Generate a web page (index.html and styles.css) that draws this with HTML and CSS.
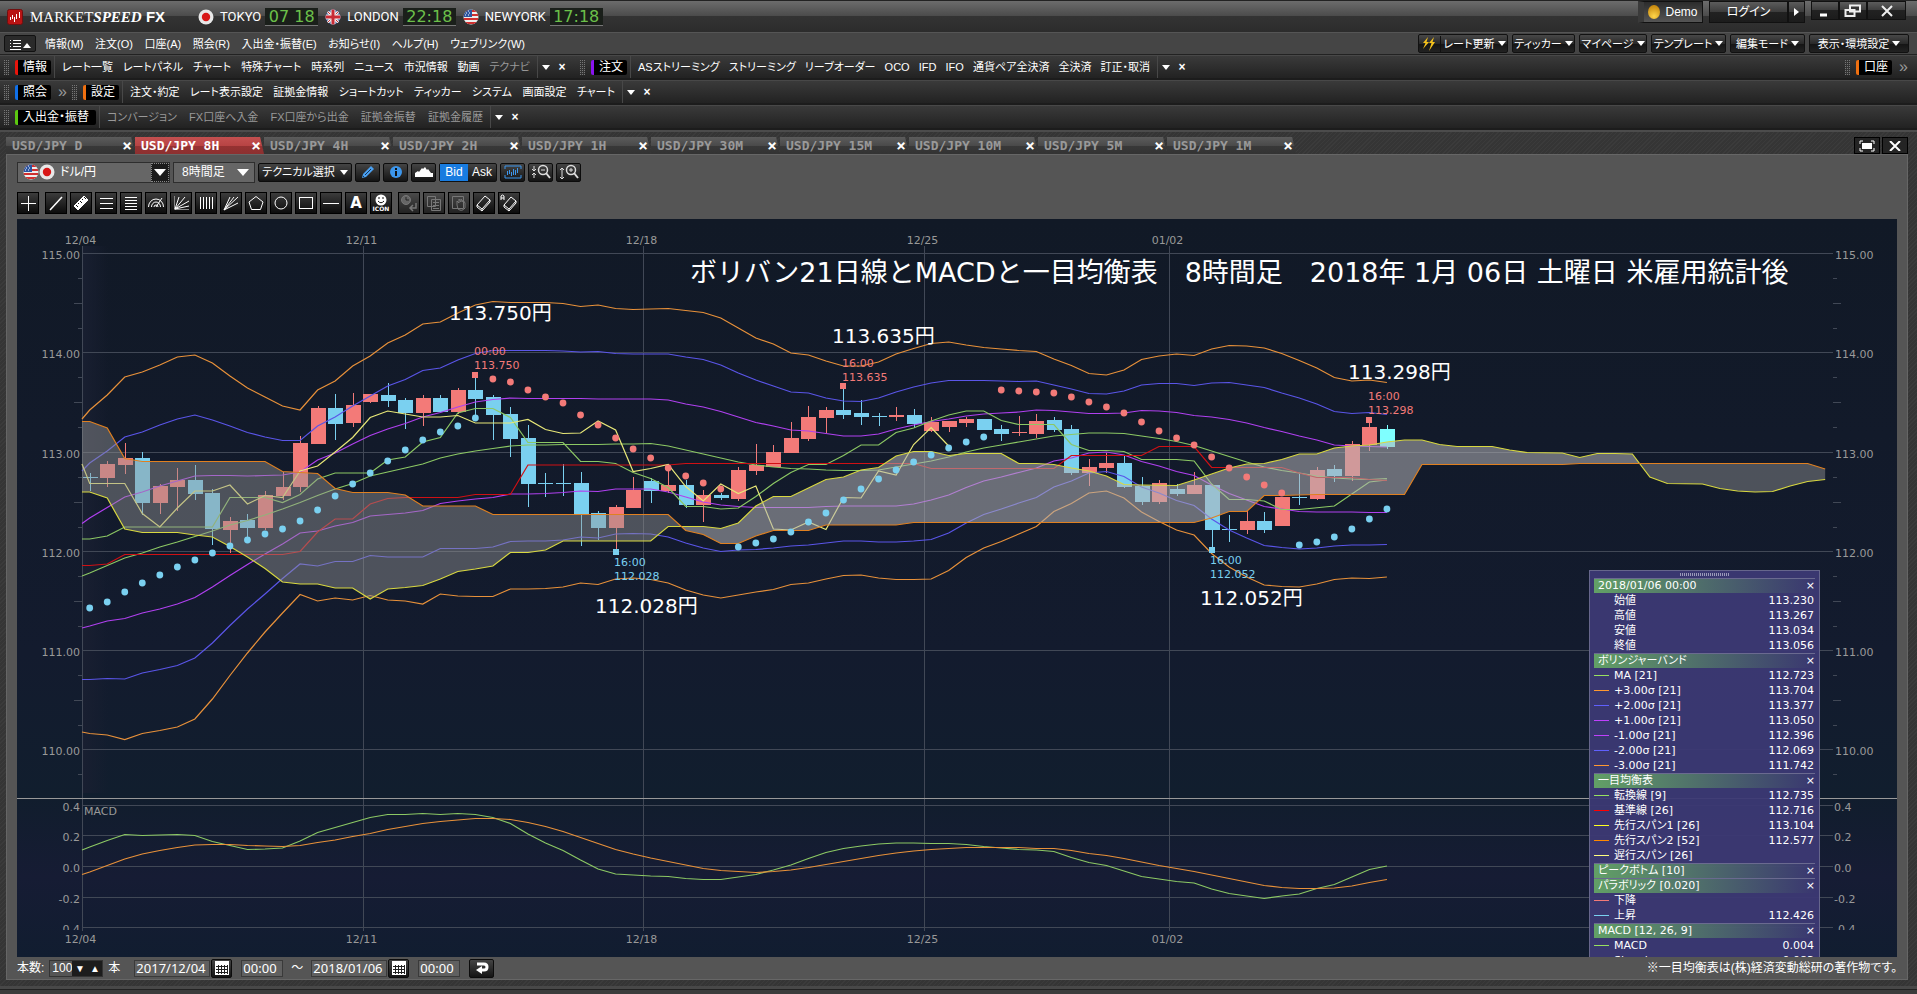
FILE: index.html
```html
<!DOCTYPE html>
<html lang="ja">
<head>
  <meta charset="UTF-8" />
  <meta name="viewport" content="width=device-width, initial-scale=1.0"/>
  <title>MARKETSPEED FX</title>
  <link rel="stylesheet" href="styles.css">
</head>
<body>

  <!-- shared flag icons -->
  <svg class="defs" width="0" height="0">
    <defs>
      <clipPath id="round"><circle cx="8" cy="8" r="7.5"/></clipPath>
      <symbol id="flag-jp" viewBox="0 0 16 16">
        <circle cx="8" cy="8" r="7.5" fill="#e8e8e8"/><circle cx="8" cy="8" r="4.2" fill="#d81818"/>
      </symbol>
      <symbol id="flag-uk" viewBox="0 0 16 16">
        <g clip-path="url(#round)">
          <rect width="16" height="16" fill="#2d4a8c"/>
          <path d="M0 0L16 16M16 0L0 16" stroke="#eee" stroke-width="3"/>
          <path d="M0 0L16 16M16 0L0 16" stroke="#c33" stroke-width="1"/>
          <path d="M8 0V16M0 8H16" stroke="#eee" stroke-width="5"/>
          <path d="M8 0V16M0 8H16" stroke="#c92a34" stroke-width="3"/>
        </g>
      </symbol>
      <symbol id="flag-us" viewBox="0 0 16 16">
        <g clip-path="url(#round)">
          <rect width="16" height="16" fill="#eee"/>
          <path d="M0 2H16M0 6H16M0 10H16M0 14H16" stroke="#cf3030" stroke-width="2"/>
          <rect width="9" height="8" fill="#2c55a0"/>
          <path d="M2 2h1M5 2h1M3 4h1M6 4h1M2 6h1M5 6h1" stroke="#fff"/>
        </g>
      </symbol>
    </defs>
  </svg>

  <header class="titlebar">
    <svg class="logo" viewBox="0 0 16 16"><rect x=".5" y=".5" width="15" height="15" rx="2" fill="#b81414" stroke="#701010"/><path d="M3.500 8v3M5.500 6v4M7.500 8v5M9.500 5v5M12.500 3v6" stroke="#fff"/></svg>
    <h1 class="brand"><span class="brand-market">MARKET</span><span class="brand-speed">SPEED</span> <span class="brand-fx">FX</span></h1>
    <div class="clocks">
      <svg class="flag"><use href="#flag-jp"/></svg><span class="city">TOKYO</span><span class="clock">07 18</span>
      <svg class="flag"><use href="#flag-uk"/></svg><span class="city">LONDON</span><span class="clock">22:18</span>
      <svg class="flag"><use href="#flag-us"/></svg><span class="city">NEWYORK</span><span class="clock">17:18</span>
    </div>
    <div class="title-right">
      <button class="demo"><i class="lamp"></i>Demo</button>
      <div class="login-group"><button class="login">ログイン</button><button class="login-more" aria-label="more"><i class="tri-right"></i></button></div>
      <div class="window-buttons">
        <button aria-label="minimize"><svg width="16" height="14"><path d="M3 11h7" stroke="#fff" stroke-width="3"/></svg></button>
        <button aria-label="restore"><svg width="18" height="14"><path d="M6 1.500h10v6h-10zM1.500 6h9v6h-9z" fill="#333" stroke="#eee" stroke-width="2"/></svg></button>
        <button class="wide" aria-label="close"><svg width="12" height="12"><path d="M1 1L11 11M11 1L1 11" stroke="#eee" stroke-width="2"/></svg></button>
      </div>
    </div>
  </header>

  <nav class="menubar">
    <button class="menu-toggle" aria-label="menu"><svg width="26" height="12"><path d="M3 2.500h1M6 2.500h8M3 5.500h1M6 5.500h8M3 8.500h1M6 8.500h8M3 11.500h11" stroke="#fff"/><path d="M16 10h8l-4-5z" fill="#fff"/></svg></button>
    <div class="menu-items">
      <button>情報(M)</button><button>注文(O)</button><button>口座(A)</button><button>照会(R)</button><button>入出金・振替(E)</button><button>お知らせ(I)</button><button>ヘルプ(H)</button><button>ウェブリンク(W)</button>
    </div>
    <div class="menu-right">
      <button class="pill rate"><svg width="16" height="16"><path d="M7 1L2 7h2.500L2 13l6-7H5.500zM13 1L8 7h2.500L8 15l6-9h-2.500z" fill="#f5c21c"/></svg><span>レート更新</span><i class="tri"></i></button>
      <button class="pill w63">ティッカー<i class="tri"></i></button>
      <button class="pill w68">マイページ<i class="tri"></i></button>
      <button class="pill w75">テンプレート<i class="tri"></i></button>
      <button class="pill w75">編集モード<i class="tri"></i></button>
      <button class="pill w100">表示・環境設定<i class="tri"></i></button>
    </div>
  </nav>

  <div class="toolbars">
    <div class="bar">
      <i class="grip"></i><span class="chip red">情報</span>
      <div class="bar-items info">
        <button>レート一覧</button><button>レートパネル</button><button>チャート</button><button>特殊チャート</button><button>時系列</button><button>ニュース</button><button>市況情報</button><button>動画</button><button class="off">テクナビ</button>
      </div>
      <div class="bar-end"><i class="tri"></i><button class="bar-x" aria-label="close">×</button></div>
      <i class="grip"></i><span class="chip purple">注文</span>
      <div class="bar-items order">
        <button>ASストリーミング</button><button>ストリーミング</button><button>リーブオーダー</button><button>OCO</button><button>IFD</button><button>IFO</button><button>通貨ペア全決済</button><button>全決済</button><button>訂正・取消</button>
      </div>
      <div class="bar-end"><i class="tri"></i><button class="bar-x" aria-label="close">×</button></div>
      <div class="bar-right"><i class="grip"></i><span class="chip orange">口座</span><span class="more">»</span></div>
    </div>
    <div class="bar">
      <i class="grip"></i><span class="chip blue">照会</span><span class="more">»</span>
      <i class="grip"></i><span class="chip orange">設定</span>
      <div class="bar-items setting">
        <button>注文・約定</button><button>レート表示設定</button><button>証拠金情報</button><button>ショートカット</button><button>ティッカー</button><button>システム</button><button>画面設定</button><button>チャート</button>
      </div>
      <div class="bar-end"><i class="tri"></i><button class="bar-x" aria-label="close">×</button></div>
    </div>
    <div class="bar">
      <i class="grip"></i><span class="chip green">入出金・振替</span>
      <div class="bar-items money">
        <button class="off">コンバージョン</button><button class="off">FX口座へ入金</button><button class="off">FX口座から出金</button><button class="off">証拠金振替</button><button class="off">証拠金履歴</button>
      </div>
      <div class="bar-end"><i class="tri"></i><button class="bar-x" aria-label="close">×</button></div>
    </div>
  </div>

  <main class="workspace">
    <div class="tabs">
      <div class="tab"><span>USD/JPY D</span><button aria-label="close">×</button></div>
      <div class="tab active"><span>USD/JPY 8H</span><button aria-label="close">×</button></div>
      <div class="tab"><span>USD/JPY 4H</span><button aria-label="close">×</button></div>
      <div class="tab"><span>USD/JPY 2H</span><button aria-label="close">×</button></div>
      <div class="tab"><span>USD/JPY 1H</span><button aria-label="close">×</button></div>
      <div class="tab"><span>USD/JPY 30M</span><button aria-label="close">×</button></div>
      <div class="tab"><span>USD/JPY 15M</span><button aria-label="close">×</button></div>
      <div class="tab"><span>USD/JPY 10M</span><button aria-label="close">×</button></div>
      <div class="tab"><span>USD/JPY 5M</span><button aria-label="close">×</button></div>
      <div class="tab"><span>USD/JPY 1M</span><button aria-label="close">×</button></div>
      <div class="tab-buttons">
        <button aria-label="maximize"><svg width="16" height="12"><path d="M1 4V1h3M12 1h3v3M15 8v3h-3M4 11H1V8" fill="none" stroke="#fff"/><rect x="3" y="3" width="10" height="6" fill="#fff"/></svg></button>
        <button aria-label="close"><svg width="12" height="10"><path d="M1 0L11 10M11 0L1 10" stroke="#fff" stroke-width="2"/></svg></button>
      </div>
    </div>

    <section class="panel">
      <div class="controls">
        <label class="field symbol"><svg class="flag"><use href="#flag-us"/></svg><svg class="flag"><use href="#flag-jp"/></svg>
          <select aria-label="通貨ペア"><option>ドル/円</option></select><span class="drop"><i class="tri big"></i></span></label>
        <label class="field period"><select aria-label="足種"><option>8時間足</option></select><i class="tri big"></i></label>
        <button class="btn technical">テクニカル選択<i class="tri"></i></button>
        <button class="btn" aria-label="draw"><svg width="16" height="16"><path d="M2 14l1-4 8-8 3 3-8 8z" fill="#4aa0f0"/><path d="M5 11l6-6M3 12l1 1" stroke="#12345c"/></svg></button>
        <button class="btn" aria-label="info"><svg width="14" height="14"><circle cx="7" cy="7" r="6" fill="#3c96ec"/><path d="M7 6v5M7 3v2" stroke="#111" stroke-width="2"/></svg></button>
        <button class="btn" aria-label="area"><svg width="18" height="12"><path d="M0 11V7l3-2 1 1 3-4 1 1 2-2 2 3 1-1 3 4 2 0v4z" fill="#fff"/></svg></button>
        <div class="bidask"><button class="on">Bid</button><button>Ask</button></div>
        <button class="btn" aria-label="fit"><svg width="18" height="14"><path d="M1 4V1h16v3M1 10v3h16v-3" fill="none" stroke="#3c96ec"/><path d="M3.500 6v4M5.500 5v4M7.500 7v4M9.500 4v6M11.500 5v5M13.500 3v5" stroke="#3c96ec"/></svg></button>
        <button class="btn" aria-label="zoom out"><svg width="20" height="16"><circle cx="12" cy="6" r="4.500" fill="none" stroke="#ddd" stroke-width="1.500"/><path d="M15 9l4 5" stroke="#ddd" stroke-width="2"/><path d="M10 6h4M3 2v5M1 5l2 2 2-2M3 14V9M1 11l2-2 2 2" fill="none" stroke="#ddd"/></svg></button>
        <button class="btn" aria-label="zoom in"><svg width="20" height="16"><circle cx="12" cy="6" r="4.500" fill="none" stroke="#ddd" stroke-width="1.500"/><path d="M15 9l4 5" stroke="#ddd" stroke-width="2"/><path d="M10 6h4M12 4v4M3 4v11M1 6l2-2 2 2M1 13l2 2 2-2" fill="none" stroke="#ddd"/></svg></button>
      </div>

      <div class="draw-tools">
        <button aria-label="cross"><svg viewBox="0 0 18 18"><path d="M9.500 2v15M2 9.500h15"/></svg></button>
        <i class="space"></i>
        <button aria-label="trend line"><svg viewBox="0 0 18 18"><path d="M3 16L15 3" stroke-width="1.500"/></svg></button>
        <button aria-label="ruler"><svg viewBox="0 0 18 18"><path d="M2 12L12 2l4 4L6 16z" fill="#fff"/><path d="M4 11l2 2M6 9l1 1M8 7l2 2M10 5l1 1M12 3l2 2" stroke="#111"/></svg></button>
        <button aria-label="three lines"><svg viewBox="0 0 18 18"><path d="M3 4.500h13M3 9.500h13M3 14.500h13"/></svg></button>
        <button aria-label="five lines"><svg viewBox="0 0 18 18"><path d="M3 3.500h12M3 6.500h12M3 9.500h12M3 12.500h12M3 15.500h12"/></svg></button>
        <button aria-label="arc"><svg viewBox="0 0 18 18"><path d="M1.500 13a7.500 8 0 0 1 15 0M4.500 13a4.500 5 0 0 1 9 0M7 13a2 2 0 0 1 4 0M9 13L15 4"/></svg></button>
        <button aria-label="fan grid"><svg viewBox="0 0 18 18"><path d="M2.500 2v13.500H17" stroke="#888"/><path d="M3 15L7 3M3 15L13 3M3 15L17 7M3 15L17 12"/></svg></button>
        <button aria-label="time zones"><svg viewBox="0 0 18 18"><path d="M3.500 3v12M6.500 3v12M9.500 3v12M12.500 3v12M15.500 3v12"/></svg></button>
        <button aria-label="fan"><svg viewBox="0 0 18 18"><path d="M2 16L8 3M2 16L16 3M2 16L16 9M2 16L12 3"/></svg></button>
        <button aria-label="pentagon"><svg viewBox="0 0 18 18"><path d="M9 2.500L16 8 13.500 15.500h-9L2 8z"/></svg></button>
        <button aria-label="circle"><svg viewBox="0 0 18 18"><circle cx="9" cy="9" r="6"/></svg></button>
        <button aria-label="rectangle"><svg viewBox="0 0 18 18"><rect x="2.500" y="3.500" width="13" height="11"/></svg></button>
        <button aria-label="horizontal line"><svg viewBox="0 0 18 18"><path d="M1 9.500h16"/></svg></button>
        <button class="letter">A</button>
        <button class="icon-btn" aria-label="icon"><svg viewBox="0 0 18 12"><circle cx="9" cy="6" r="5.500" fill="#fff" stroke="none"/><path d="M7 3v2M11 3v2M6 7q3 3.500 6 0" stroke="#111"/></svg><small>ICON</small></button>
        <i class="space"></i>
        <button class="dim" aria-label="history"><svg viewBox="0 0 18 18"><circle cx="6" cy="6" r="4.500" fill="#666"/><path d="M6 3v3h3" stroke="#222"/><path d="M16 9v5h-5M13 11l-3 3 3 3" stroke-width="1.500"/></svg></button>
        <button class="dim" aria-label="copy"><svg viewBox="0 0 18 18"><path d="M2.500 2.500h8v10h-8zM6.500 5.500h9v11h-9zM8 8.500h6M8 11.500h6M8 14.500h6"/></svg></button>
        <button class="dim" aria-label="pan"><svg viewBox="0 0 18 18"><path d="M2.500 2.500h11v12h-11zM7 11V7l2 2V5l2 3V5l2 3V6l2 3v5q-3 4-7 1z"/></svg></button>
        <button aria-label="eraser"><svg viewBox="0 0 18 18"><path d="M2 11L10 2l5 4-8 9zM2 11v2l5 4v-2M7 17l8-9V6"/></svg></button>
        <button class="erase-all" aria-label="erase all"><svg viewBox="0 0 18 18"><path d="M4 11L11 3l5 4-7 8zM4 11v2l5 4v-2M9 17l7-8V7M1 6V2q1.500-2 3 0v4M1 4h3"/></svg></button>
      </div>

      <div class="chart">
        <svg id="chart" viewBox="17 219 1880 738"></svg>

        <table class="legend">
          <caption><i></i></caption>
          <tbody id="legend"></tbody>
        </table>
      </div>

      <div class="footer">
        <label for="count">本数:</label>
        <div class="spin"><input id="count" type="text" value="100"><button aria-label="down">▼</button><button aria-label="up">▲</button></div>
        <span class="unit">本</span>
        <input class="date" type="text" value="2017/12/04" aria-label="開始日"><button class="btn cal" aria-label="calendar"><svg width="14" height="14"><path d="M0 0h14v14H0z" fill="#fff"/><path d="M1 5.500h12M1 8.500h12M1 11.500h12M3.500 4v9M6.500 4v9M9.500 4v9M12.500 4v9" stroke="#222"/></svg></button>
        <input class="time" type="text" value="00:00" aria-label="開始時刻">
        <span class="wave">～</span>
        <input class="date" type="text" value="2018/01/06" aria-label="終了日"><button class="btn cal" aria-label="calendar"><svg width="14" height="14"><path d="M0 0h14v14H0z" fill="#fff"/><path d="M1 5.500h12M1 8.500h12M1 11.500h12M3.500 4v9M6.500 4v9M9.500 4v9M12.500 4v9" stroke="#222"/></svg></button>
        <input class="time" type="text" value="00:00" aria-label="終了時刻">
        <button class="btn reload" aria-label="reload"><svg width="14" height="14"><path d="M2 3h7q3 0 3 3t-3 3H5" fill="none" stroke="#fff" stroke-width="3"/><path d="M1 9l6-4v8z" fill="#fff"/></svg></button>
        <span class="note">※一目均衡表は(株)経済変動総研の著作物です。</span>
      </div>
    </section>
  </main>
  <div class="bottom-edge"></div>

  <script src="chart.js"></script>
</body>
</html>
```
FILE: styles.css
```css
* {
  box-sizing: border-box;
}

body {
  margin: 0;
  min-height: 100vh;
  display: flex;
  flex-direction: column;
  background-color: #454545;
  color: #fff;
  font-family: "Liberation Sans", "Noto Sans CJK JP", sans-serif;
  font-size: 12px;
  line-height: 16px;
  font-feature-settings: "palt";
}

button, input, select {
  font: inherit;
  font-feature-settings: inherit;
  color: inherit;
  margin: 0;
  padding: 0;
  border: 0;
  background: none;
}

button {
  white-space: nowrap;
  cursor: pointer;
}

svg {
  display: block;
  flex: none;
}

.defs {
  position: absolute;
}

.tri {
  flex: none;
  border: 4px solid transparent;
  border-top: 5px solid #fff;
  border-bottom: 0;
}

.tri.big {
  border-width: 7px 6px 0;
}

.tri-right {
  border: 4px solid transparent;
  border-left: 5px solid #fff;
  border-right: 0;
}

.flag {
  width: 16px;
  height: 16px;
}

/* title bar */
.titlebar {
  display: flex;
  align-items: center;
  height: 32px;
  padding-left: 7px;
  background: linear-gradient(#6c6c6c, #4a4a4a 50%, #333 50%, #2c2c2c);
  border-top: 1px solid #222;
}

.logo {
  width: 16px;
  height: 16px;
}

.brand {
  margin: 0 0 0 7px;
  width: 168px;
  font-weight: normal;
  font-size: 15px;
  white-space: nowrap;
}

.brand-market, .brand-speed {
  font-family: "Liberation Serif", serif;
}

.brand-speed {
  font-style: italic;
  font-weight: bold;
}

.brand-fx {
  font-weight: bold;
}

.clocks {
  display: flex;
  align-items: center;
}

.city {
  margin: 0 4px 0 6px;
  font: 13px/16px Roboto, sans-serif;
}

.clock {
  width: 53px;
  height: 18px;
  margin-right: 7px;
  background-color: #1a1f1a;
  border-bottom: 1px solid #777;
  color: #6cc04a;
  font: 16px/17px "DejaVu Sans", sans-serif;
  text-align: center;
}

.title-right {
  display: flex;
  align-items: flex-start;
  align-self: flex-start;
  gap: 6px;
  margin-left: auto;
  padding-right: 11px;
}

.title-right button {
  background: linear-gradient(#5c5c5c, #3c3c3c 50%, #222 50%, #1c1c1c);
  border: 1px solid #111;
  display: flex;
  align-items: center;
  justify-content: center;
}

.title-right .demo {
  width: 65px;
  height: 22px;
  gap: 5px;
  background: linear-gradient(#2c2c2c, #555);
  border-left: 6px solid #3a3a3a;
}

.lamp {
  width: 12px;
  height: 14px;
  border-radius: 50%;
  background: radial-gradient(circle at 50% 80%, #ffd54a, #c88a10 80%);
}

.login-group, .window-buttons {
  display: flex;
}

.title-right .login {
  width: 79px;
  height: 22px;
}

.title-right .login-more {
  width: 17px;
  height: 22px;
}

.window-buttons button {
  width: 28px;
  height: 19px;
}

.window-buttons .wide {
  width: 39px;
}

/* menu */
.menubar {
  display: flex;
  align-items: center;
  height: 22px;
  padding: 0 8px 0 4px;
  background-color: #454545;
  border-top: 1px solid #555;
}

.menu-toggle {
  width: 32px;
  height: 17px;
  padding-left: 2px;
  border: 1px solid #111;
  border-radius: 2px;
  background-color: #2a2a2a;
}

.menu-items {
  display: flex;
  justify-content: space-between;
  width: 480px;
  margin-left: 9px;
  font-size: 11px;
}

.menu-right {
  display: flex;
  gap: 4px;
  margin-left: auto;
}

.pill {
  display: flex;
  align-items: center;
  justify-content: center;
  gap: 3px;
  height: 19px;
  border: 1px solid #111;
  border-radius: 2px;
  background: linear-gradient(#484848, #2a2a2a 50%, #141414 50%, #222);
  font-size: 11px;
}

.rate {
  width: 90px;
}

.rate span {
  padding-left: 3px;
  border-left: 1px solid #111;
}

.w63 {
  width: 63px;
}

.w68 {
  width: 68px;
}

.w75 {
  width: 75px;
}

.w100 {
  width: 100px;
}

/* tool bars */
.toolbars {
  border-top: 1px solid #222;
}

.bar {
  display: flex;
  align-items: center;
  height: 25px;
  padding: 0 4px;
  background: linear-gradient(#3a3a3a, #222);
  border-bottom: 2px solid #1c1c1c;
  border-top: 1px solid #484848;
}

.grip {
  width: 5px;
  height: 16px;
  background:
    repeating-linear-gradient(#333 0 1px, transparent 1px 2px),
    repeating-linear-gradient(90deg, #777 0 1px, #333 1px 2px);
}

.chip {
  height: 15px;
  margin: 0 3px 0 6px;
  padding: 0 4px 0 5px;
  border-left: 3px solid #e8150c;
  border-radius: 2px;
  background-color: #000;
  line-height: 15px;
  white-space: nowrap;
}

.chip.purple {
  border-color: #8a14f0;
}

.chip.orange {
  border-color: #f07010;
}

.chip.blue {
  border-color: #1070e8;
}

.chip.green {
  padding-right: 7px;
  border-color: #5cc810;
}

.bar-items {
  display: flex;
  justify-content: space-between;
  align-items: center;
  height: 22px;
  padding: 0 7px;
  border: 1px solid #484848;
  border-width: 0 1px;
  font-size: 11px;
}

.info {
  width: 484px;
}

.order {
  width: 528px;
}

.setting {
  width: 501px;
}

.money {
  width: 392px;
}

.off {
  color: #999;
}

.bar-end {
  display: flex;
  align-items: center;
  gap: 7px;
  width: 42px;
  padding-left: 4px;
}

.bar-x {
  width: 10px;
  font-weight: bold;
}

.bar-right {
  display: flex;
  align-items: center;
  margin-left: auto;
}

.more {
  width: 18px;
  padding-left: 4px;
  color: #999;
  font-size: 16px;
  line-height: 16px;
}

/* workspace */
.workspace {
  flex: 1;
  display: flex;
  flex-direction: column;
  padding: 4px 9px 6px 6px;
  border-top: 2px solid #4c4c4c;
  background: repeating-linear-gradient(135deg, #3b3b3b 0 1px, #353535 1px 3px);
}

.tabs {
  display: flex;
  align-items: flex-end;
  height: 18px;
}

.tab {
  display: flex;
  align-items: center;
  justify-content: space-between;
  width: 129px;
  height: 17px;
  padding: 0 3px 0 6px;
  color: #999;
  background: linear-gradient(#5c5c5c, #4a4a4a 50%, #383838 50%, #333);
  clip-path: polygon(0 0, 97% 0, 100% 100%, 0 100%);
  font: bold 13px/16px "DejaVu Sans Mono", monospace;
}

.tab button {
  color: #fff;
  font-size: 16px;
  line-height: 16px;
}

.tab.active {
  color: #fff;
  background: linear-gradient(#c45050, #b84444 50%, #963232 50%, #8c3030);
}

.tab-buttons {
  display: flex;
  gap: 2px;
  margin-left: auto;
}

.tab-buttons button {
  display: flex;
  align-items: center;
  justify-content: center;
  width: 26px;
  height: 17px;
  border: 1px solid #000;
  background-color: #242424;
}

.panel {
  flex: 1;
  padding: 7px 10px 0;
  border: 1px solid #666;
  background-color: #555;
}

.controls {
  display: flex;
  align-items: center;
  gap: 3px;
  height: 20px;
}

.field {
  display: flex;
  align-items: center;
  height: 21px;
  border: 1px solid #2e2e2e;
  background-color: #666;
}

.field select {
  flex: 1;
  min-width: 0;
  appearance: none;
  outline: none;
}

.symbol {
  width: 153px;
  padding-left: 5px;
}

.symbol select {
  padding-left: 5px;
}

.drop {
  display: flex;
  align-items: center;
  justify-content: center;
  width: 18px;
  height: 19px;
  border: 1px dotted #888;
  background-color: #1c1c1c;
}

.period {
  width: 82px;
  padding: 0 5px 0 8px;
}

.btn {
  display: flex;
  align-items: center;
  justify-content: center;
  width: 25px;
  height: 19px;
  border: 1px solid #0c0c0c;
  border-radius: 2px;
  background: linear-gradient(#444, #141414);
}

.technical {
  width: 94px;
  gap: 5px;
  font-size: 11px;
}

.bidask {
  display: flex;
  border: 1px solid #111;
  border-radius: 2px;
  background: linear-gradient(#444, #141414);
}

.bidask button {
  width: 28px;
  height: 17px;
}

.bidask .on {
  background-color: #187ce0;
}

.draw-tools {
  display: flex;
  gap: 3px;
  margin: 10px 0 5px;
}

.draw-tools button {
  width: 22px;
  height: 22px;
  padding: 1px;
  border: 1px solid #000;
  background: linear-gradient(#3c3c3c, #0c0c0c);
}

.draw-tools svg {
  width: 18px;
  height: 18px;
  fill: none;
  stroke: #fff;
}

.draw-tools .dim {
  background: linear-gradient(#4a4a4a, #222);
}

.draw-tools .dim svg {
  stroke: #777;
}

.draw-tools .letter {
  font: bold 15px/18px "DejaVu Sans", sans-serif;
}

.draw-tools .icon-btn svg {
  height: 12px;
}

.icon-btn small {
  display: block;
  font: bold 6px/6px "DejaVu Sans", sans-serif;
}

/* chart */
.chart {
  position: relative;
  background-color: #111a29;
  font-feature-settings: normal;
}

.chart > svg {
  width: 100%;
  height: auto;
}

.chart text {
  font-family: "DejaVu Sans", "Noto Sans CJK JP", sans-serif;
  font-size: 11px;
  fill: #999;
}

.chart .mark {
  font-size: 20px;
  fill: #fff;
}

.chart .headline {
  font-size: 27px;
  fill: #fff;
}

.chart .up {
  fill: #f37a78;
}

.chart .down {
  fill: #7ad0f0;
}

.chart .now {
  fill: #7fffff;
}

.grid {
  stroke: #414856;
}

.line {
  fill: none;
  stroke-width: 1.2;
}

.legend {
  position: absolute;
  right: 77px;
  bottom: 0;
  display: block;
  width: 231px;
  height: 387px;
  padding: 0 4px;
  overflow: hidden;
  border: 1px solid #66668c;
  border-bottom: 0;
  border-spacing: 0;
  background-color: rgba(60, 57, 116, 0.95);
  font: 11px/15px "DejaVu Sans", "Noto Sans CJK JP", sans-serif;
  font-feature-settings: "palt";
}

.legend caption {
  display: block;
  height: 7px;
  padding-top: 2px;
}

.legend caption i {
  display: block;
  width: 50px;
  height: 3px;
  margin: 0 auto;
  background: repeating-linear-gradient(90deg, #9a9ab8 0 1px, transparent 1px 2px);
}

.legend tbody {
  display: block;
}

.legend tr {
  display: flex;
  align-items: center;
  height: 15px;
}

.legend th {
  display: flex;
  flex: 1;
  justify-content: space-between;
  padding: 0 0 0 4px;
  border-top: 1px solid #6a6a90;
  background: linear-gradient(90deg, #62a066, transparent);
  font-weight: normal;
  line-height: 14px;
}

.legend td {
  padding: 0;
}

.legend .swatch {
  flex: none;
  width: 15px;
  height: 1px;
  margin-right: 5px;
}

.legend .value {
  margin-left: auto;
  padding-right: 1px;
}

/* footer */
.footer {
  display: flex;
  align-items: center;
  height: 22px;
}

.footer .spin {
  display: flex;
  height: 17px;
  margin: 0 5px;
  border: 1px solid #333;
}

.spin input {
  width: 22px;
  text-align: right;
}

.spin button {
  width: 15px;
  background-color: #1c1c1c;
  font-size: 10px;
}

.unit {
  width: 21px;
}

.footer .date, .footer .time {
  width: 76px;
  height: 17px;
  margin-left: 5px;
  padding-left: 1px;
  border: 1px solid #3a3a3a;
  background-color: #606060;
  font: 13px/15px "Noto Sans", sans-serif;
}

.footer .time {
  width: 42px;
  margin-left: 9px;
}

.footer .cal {
  width: 21px;
  margin-left: 1px;
}

.wave {
  width: 18px;
  margin-left: 5px;
  text-align: center;
}

.footer .reload {
  margin-left: 9px;
}

.note {
  margin-left: auto;
}

.bottom-edge {
  height: 9px;
  border-top: 3px solid #484848;
  border-bottom: 1px solid #222;
  background: linear-gradient(#222 1px, #3c3c3c 1px);
}
```
FILE: chart.js
```js
const STEP = 17.53;
const X0 = 89.7;
const LEFT = 82;
const RIGHT = 1833;
const x = k => (k < 0 ? LEFT : X0 + k * STEP);

// turns [bar, y] corners into one value for every bar
function fill(corners) {
  const ys = [];
  for (let i = 0; i < corners.length - 1; i++) {
    const [k0, y0] = corners[i], [k1, y1] = corners[i + 1];
    for (let k = k0; k < k1; k++) ys.push(y0 + (y1 - y0) * (k - k0) / (k1 - k0));
  }
  ys.push(corners[corners.length - 1][1]);
  return ys;
}

// first value sits on the left axis, the rest follow bar by bar
const lines = [
  ["#e8913a", [419,410,395,377,372,365,357,355,363,376,388,397,406,410,390,381,366,356,343,335,324,322,313,305,301.5,302.5,302.5,302.5,303.5,306.5,305,308.5,309.5,309,308.5,310.5,312.5,318,328,338,344,353,355,361,366,366,362,354,348.5,343.5,342,345,347.5,349,350.5,351.5,359,365.5,373.5,375,370,359.5,356,354,355.5,349,345.5,346,348,353.5,360.5,368,377.5,381,380,382.5]],
  ["#5a55e8", [471,463,451,437,432,425,419,415,420,426,432.5,437,440.5,440.5,426,417,406,396,386,379.5,370.5,368,360,353.5,350.5,350.5,350.5,350.5,351,352,351.5,353.5,354,354,354,357,359.5,365,373,380,386,392,393,398,401,401.5,398,392,387,383,380.5,380.5,380.5,381,381.5,381,385,389,393.5,394,391,385,383.5,383.5,385.5,383,382.5,385,387.5,393,398,404,411.5,413.5,412.5,414.5]],
  ["#b040f0", [523.5,518,507.5,497,492,486,481,476,475.5,475.5,476,475.5,475,472,460,453,444,435.5,429,423.5,417,412.5,407,402,399.5,398,398.5,398.5,398.5,398.5,399,399,399,399,400,404,407,411.5,417,422.5,426,430,431,433.5,436,436,434,429,425,421.5,419,416,414,413,412,410,410.5,412,413.5,413.5,413,410.5,411,412.5,415.5,417,419.5,423,427.5,431.5,436,440,445,446,446.5,447]],
  ["#8cc864", [576,573,565.5,558,553,547,542,536.5,531,525,520.5,515,509,502.5,495.5,489,483.5,476,472,468,464,458,454,451,448.5,446,445,445,444.5,444.5,444.5,444,444,443.5,446,450,454,458,462,465,467,468.5,469,470,470.5,470.5,470,467,464,461,457,452,448,445,442,439,436,434.5,433,433,433.5,436,438.5,441.5,445.5,451,456.5,462,467,470.5,473,476,478,479,479.5,478.5]],
  ["#b040f0", [628,626,621,618.5,613,609,604,597.5,587,575.5,564.5,554,544,533,531,526,522.5,516,514.5,513,510.5,503.5,501,499,497.5,494,494,493.5,492.5,491,491.5,489,489,489,492,497,502,505,506.5,507.5,507.5,507.5,507.5,506.5,506,506,506,506,504,500,495,487.5,481,477,472.5,468,461,458,453,452,455,461.5,466,471.5,475.5,485,493.5,500,506.5,509,511.5,512,512,512,512.5,512.5]],
  ["#5a55e8", [679.5,679.5,678.5,679,673,669.5,665.5,658,643,625.5,609,594,578.5,564,566,561.5,561.5,555.5,557,557,557,548.5,548.5,548.5,547,541.5,541,541,540,537,538,534,533.5,534,537,543,548,551.5,550,549.5,548,546,545,543,541,541,542,542,541,539.5,533,523,514.5,509,503,497.5,487,481,473,471.5,476.5,487,493,500.5,505.5,519,530,538,545.5,547.5,549,548,546,545,545,544.5]],
  ["#e8913a", [732,733.5,735,739.5,733.5,730.5,727,719,699,675.5,653,632,613,594.5,601,598,600,595.5,600,601,604,594,596,596.5,596.5,589,589,588.5,587,583,584.5,579,578,579.5,583,590,595,598,595,592,589.5,584.5,583,579,575.5,575,578,579.5,579.5,579,570.5,557.5,548,541.5,534,526.5,511.5,503.5,493,491,498,512,521.5,530,535,553.5,567,577,585,586.5,587,584,579.5,578,578.5,577]],
  ["#8cc864", fill([[-1,539],[0,539],[1,536],[2,527],[7,527],[8,497.5],[10,497.5],[11,502.5],[12,494.5],[13,479],[14,473],[16,473],[17,460],[18,457],[19,442],[20,437.5],[21,413],[22,408.5],[23,408.5],[24,417.5],[25,442.5],[27,442.5],[28,461.5],[29,461.5],[30,463.5],[31,472.5],[32,478.5],[33,487.5],[34,506.5],[35,506.5],[36,509],[37,508],[38,496.5],[39,483.5],[40,472.5],[41,464.5],[42,464.5],[43,455.5],[44,445],[45,445],[46,432.5],[47,428],[48,421],[49,415],[50,411],[51,411],[52,420.5],[53,424.5],[55,424.5],[56,444.5],[57,450.5],[58,450.5],[59,451.5],[60,459.5],[62,459.5],[63,461],[64,484],[65,499.5],[66,499.5],[67,501],[68,509.5],[69,509.5],[71,506],[72,494],[73,482],[74,480]])],
  ["#d01014", fill([[-1,565.5],[0,565.5],[1,564],[2,554.5],[11,554.5],[12,551.5],[13,532],[14,519],[15,519],[16,504],[17,498.5],[18,497.5],[21,497.5],[22,494.5],[24,494.5],[25,465],[33,465],[34,463.5],[47,463.5],[48,468.5],[55,468.5],[56,455.5],[60,455.5],[61,446.5],[63,446.5],[64,467.5],[68,467.5],[69,473],[70,477.5],[72,477.5],[73,479.5],[74,480.5]])],
  ["#e8e878", fill([[-1,464],[0,483.5],[2,483.5],[3,513.5],[4,527],[5,508],[6,491],[7,491],[8,485],[9,504],[10,495.5],[11,497.5],[12,471],[13,466],[14,452],[15,437.5],[16,417.5],[17,411],[18,414],[19,417],[20,417],[21,415.5],[22,423],[24,423],[25,419.5],[26,429.5],[27,433.5],[28,433],[29,421],[30,430],[31,471.5],[32,468.5],[33,464.5],[34,486.5],[35,501],[36,484],[37,493.5],[38,486],[39,529],[40,530],[41,522],[42,529.5],[43,497.5],[44,498],[45,471],[46,475],[47,444.5],[48,427.5],[49,446]])]
];

const spanA = fill([[-1,492],[0,492],[1,498],[2,529],[3,532.5],[5,532.5],[6,535],[7,537],[8,546.5],[9,557],[10,568.5],[11,582],[12,584],[13,584],[14,588],[15,588],[16,599],[17,589],[18,587.5],[19,585.5],[20,579],[21,571.5],[22,569],[23,566],[24,552.5],[25,552.5],[26,550],[27,541],[32,541],[33,526.5],[35,526.5],[36,528.5],[37,523],[38,506],[39,496.5],[40,496.5],[41,488],[42,479.5],[43,477],[44,470],[45,467.5],[46,456],[47,451.5],[48,451.5],[49,455.5],[50,453.5],[52,453.5],[53,463.5],[54,463.5],[55,464.5],[56,468],[57,471],[58,476],[59,484.5],[60,485],[62,485.5],[63,480],[64,474],[65,468],[66,464],[67,463.5],[68,459.5],[69,454],[70,454],[71,448],[72,446],[73,445],[74,442],[75,440],[76,440],[77,444.5],[78,446.5],[80,446.5],[81,450],[82,452.5],[84,453],[85,457.5],[86,453.5],[87,453.5],[88,454],[89,477],[90,483.5],[92,484],[93,488.5],[94,491],[95,492],[96,491.5],[97,486],[98,481.5],[99,479.5]]);
const spanB = fill([[-1,421.5],[0,421.5],[1,428],[2,458.5],[3,461.5],[10,461.5],[11,471.5],[13,473.5],[14,488.5],[15,492.5],[17,492.5],[18,495],[19,506],[22,506],[23,514.5],[33,514.5],[34,530.5],[35,534.5],[36,543.5],[37,543.5],[38,536],[39,530.5],[41,530.5],[42,525],[46,525],[47,522.5],[63,522.5],[64,518],[65,511.5],[66,511.5],[67,495.5],[68,495.5],[70,494.5],[75,494.5],[76,464.5],[84,464.5],[85,463.5],[98,463.5],[99,469]]);

// [type, body top, body bottom, high, low]
const candles = [
  ["d",477,478,473,491],["u",464,478,461,487],["u",458,465,443,474],["d",458,503,452,515],["u",486,503,484,514],["u",480,487,468,511],["d",480,494,465,500],["d",493,529,489,545],["u",521,530,517,553],["d",520,528,514,538],["u",495,528,491,530],["u",487,496,472,500],["u",443,487,436,492],["u",408,444,406,444],["d",408,424,394,440],["u",405,423,393,427],["u",394,402,394,403],["d",395,401,383,407],["d",400,413,398,429],["u",398,413,395,426],["d",398,412,395,412],["u",390,412,388,414],["d",390,399,378,418],["d",397,415,395,440],["d",414,439,407,457],["d",438,484,425,507],["d",483,484,473,497],["d",483,484,464,496],["d",483,514,472,546],["d",513,528,511,540],["u",507,528,505,550],["u",490,508,477,508],["d",481,491,478,503],["u",485,491,464,493],["d",485,505,480,508],["u",495,505,490,522],["d",495,498,493,500],["u",470,499,467,501],["u",465,471,444,475],["u",452,467,445,467],["u",438,453,422,453],["u",417,439,406,441],["u",410,418,407,433],["d",410,415,386,419],["d",413,417,400,425],["d",416,417,413,426],["u",415,417,407,421],["d",415,424,409,428],["u",422,431,417,432],["u",421,427,421,432],["u",419,423,417,427],["d",419,430,419,430],["d",429,434,425,441],["u",432,433,416,436],["u",421,434,414,438],["d",420,430,417,432],["d",429,473,425,475],["u",467,473,459,486],["u",463,468,453,473],["d",463,487,456,488],["d",486,502,477,505],["u",483,502,480,504],["d",489,494,484,496],["u",485,494,472,494],["d",485,530,485,549],["d",529,530,515,542],["u",521,530,511,534],["d",521,530,512,533],["u",497,526,497,526],["d",497,498,474,505],["u",470,499,467,500],["d",469,476,465,482],["u",444,476,441,481],["u",427,445,418,451],["n",429,447,425,449]
];

const sar = [
  ["down", 0, [608,602,592,583,575,567,560,553,546,540,534,529,521,510,496,484,473,461,450,440,432,426,418]],
  ["up", 23, [379,382,390,397,403,415,425,438,449,458,468,476,483,489]],
  ["down", 37, [547,543,539,532,522,513,500,489,479,470,462,455,448,442,437]],
  ["up", 52, [390,391,392,393,397,402,407,413,422,431,438,445,457,468,477,485,493]],
  ["down", 69, [545,542,537,529,519,509]]
];

const peaks = [
  ["up", 22, 375, 474, 355, "00:00", "113.750"],
  ["up", 43, 386, 842, 367, "16:00", "113.635"],
  ["up", 73, 420, 1368, 400, "16:00", "113.298"],
  ["down", 30, 552, 614, 566, "16:00", "112.028"],
  ["down", 64, 550, 1210, 564, "16:00", "112.052"]
];

const marks = [
  [449, 320, "113.750円"], [832, 343, "113.635円"], [1348, 379, "113.298円"],
  [595, 613, "112.028円"], [1200, 605, "112.052円"]
];

const macd = [
  ["#8cc864", [850,847,840.5,834.5,835.5,835,834.5,835.5,841.5,845.5,849.5,849,848,841,832.5,827.5,822.5,817.5,814.5,814.5,813.5,814.5,813.5,814.5,817.5,823.5,834,843,850.5,860,869,874,875,876,876.5,878.5,879.5,879.5,877,874.5,870,865,858.5,852.5,848.5,846,844,843,843,843.5,843.5,844.5,846.5,848,849.5,850,851.5,857.5,862.5,865.5,871,876.5,879,881.5,883,889,893.5,896,898.5,896,894,888.5,884.5,877,869.5,866]],
  ["#e8913a", [874.5,872,865.5,859,854,850.5,847.5,845,844.5,844.5,845.5,846,846.5,845.5,842.5,840,836.5,833.5,829.5,826.5,823.5,821.5,820,818.5,818.5,819.5,822.5,826.5,831.5,837.5,843.5,849.5,854,858,861.5,865,868.5,870.5,871.5,872.5,871.5,870,867.5,864.5,861.5,858.5,855.5,853,851,849.5,848.5,847.5,847.5,847.5,847.5,848.5,848.5,850.5,853.5,855.5,858.5,862,865.5,868.5,871.5,875,878.5,882,885.5,887.5,888.5,888.5,888,886,882.5,879.5]]
];

const points = ys => ys.map((y, i) => [x(i - 1), y]);
const polyline = (color, pts) =>
  `<polyline class="line" stroke="${color}" points="${pts.map(p => p.join(",")).join(" ")}"/>`;
const seg = (x1, y1, x2, y2) => `<path class="grid" d="M${x1} ${y1}L${x2} ${y2}"/>`;
const label = (tx, ty, text, anchor = "start", cls = "") =>
  `<text class="${cls}" x="${tx}" y="${ty}" text-anchor="${anchor}">${text}</text>`;

// split the cloud wherever the two spans cross
function cloud() {
  const a = points(spanA), b = points(spanB);
  const n = Math.min(a.length, b.length);
  const runs = [];
  let top = [a[0]], low = [b[0]];
  const push = i => {
    const color = a[i][1] > b[i][1] ? "rgba(150,150,150,0.45)" : "rgba(178,178,182,0.55)";
    runs.push(`<polygon fill="${color}" points="${top.concat(low.slice().reverse()).map(p => p.join(",")).join(" ")}"/>`);
  };
  for (let i = 1; i < n; i++) {
    const d0 = a[i - 1][1] - b[i - 1][1], d1 = a[i][1] - b[i][1];
    if (d0 * d1 < 0) {
      const t = d0 / (d0 - d1);
      const c = [a[i - 1][0] + t * (a[i][0] - a[i - 1][0]), a[i - 1][1] + t * (a[i][1] - a[i - 1][1])];
      top.push(c);
      low.push(c);
      push(i - 1);
      top = [c];
      low = [c];
    }
    top.push(a[i]);
    low.push(b[i]);
  }
  push(n - 1);
  return runs.join("");
}

function drawChart() {
  let s = `<defs>
    <linearGradient id="sky" x2="0" y2="1"><stop offset="0" stop-color="#111926"/><stop offset=".75" stop-color="#131b2e"/><stop offset="1" stop-color="#111e2e"/></linearGradient>
    <linearGradient id="sky2" x2="0" y2="1"><stop offset="0" stop-color="#111d2d"/><stop offset=".5" stop-color="#161c34"/><stop offset="1" stop-color="#111d30"/></linearGradient>
    <linearGradient id="edge"><stop offset="0" stop-color="#191f31"/><stop offset="1" stop-color="#191f31" stop-opacity="0"/></linearGradient>
    <clipPath id="pane"><rect x="17" y="802" width="1880" height="128"/></clipPath>
  </defs>
  <rect x="17" y="219" width="1880" height="579" fill="url(#sky)"/>
  <rect x="17" y="798" width="1880" height="159" fill="url(#sky2)"/>
  <rect x="82" y="246" width="26" height="547" fill="url(#edge)"/>`;

  // price grid
  [253.5, 352.5, 452.5, 551.5, 650.5, 749.5].forEach((y, i) => {
    s += seg(LEFT, y, RIGHT, y);
    s += label(80, y + 5, `${115 - i}.00`, "end") + label(1835, y + 5, `${115 - i}.00`);
    s += seg(78, y + 25, LEFT, y + 25) + seg(RIGHT, y + 25, 1837, y + 25);
    if (i < 5) {
      s += seg(74, y + 50, LEFT, y + 50) + seg(RIGHT, y + 50, 1841, y + 50);
      s += seg(78, y + 75, LEFT, y + 75) + seg(RIGHT, y + 75, 1837, y + 75);
    }
  });
  [[82.5, "12/04"], [363.5, "12/11"], [643.5, "12/18"], [924.5, "12/25"], [1169.5, "01/02"]].forEach(([gx, t]) => {
    s += seg(gx, 246, gx, 931);
    s += label(gx - 2, 244, t, "middle") + label(gx - 2, 943, t, "middle");
  });

  candles.forEach(([t, top, low, high, end], k) => {
    const cls = { u: "up", d: "down", n: "now" }[t];
    const cx = Math.round(x(k));
    s += `<g class="${cls}"><rect x="${cx}" y="${high}" width="1" height="${end - high}"/>`;
    s += `<rect x="${cx - 7}" y="${top}" width="15" height="${Math.max(1, low - top)}"/></g>`;
  });
  lines.forEach(([c, ys]) => s += polyline(c, points(ys)));
  s += cloud() + polyline("#d8d840", points(spanA)) + polyline("#e08020", points(spanB));
  sar.forEach(([cls, from, ys]) => ys.forEach((y, i) =>
    s += `<circle class="${cls}" cx="${x(from + i)}" cy="${y}" r="3.4"/>`));
  peaks.forEach(([cls, k, y, tx, ty, time, price]) => {
    s += `<rect class="${cls}" x="${Math.round(x(k)) - 3}" y="${y - 3}" width="6" height="6"/>`;
    s += label(tx, ty, time, "start", cls) + label(tx, ty + 14, price, "start", cls);
  });
  marks.forEach(([tx, ty, t]) => s += label(tx, ty, t, "start", "mark"));
  s += label(690, 282, "ボリバン21日線とMACDと一目均衡表　8時間足　2018年 1月 06日 土曜日 米雇用統計後", "start", "headline");

  // MACD pane
  s += `<path d="M17 798.500H1897" stroke="#999"/><g clip-path="url(#pane)">`;
  [805.5, 835.5, 866.5, 897.5, 927.5].forEach((y, i) => {
    const t = (0.4 - i * 0.2).toFixed(1).replace("-0.0", "0.0");
    s += seg(LEFT, y, RIGHT, y) + label(80, y + 5, t, "end") + label(1834, y + 5, t);
  });
  s += label(84, 815, "MACD") + "</g>";
  macd.forEach(([c, ys]) => s += polyline(c, points(ys)));
  document.getElementById("chart").innerHTML = s;
}

// [name, value, colour], a row with a name alone is a heading
const legend = [
  ["2018/01/06 00:00"], ["始値", "113.230"], ["高値", "113.267"], ["安値", "113.034"], ["終値", "113.056"],
  ["ボリンジャーバンド"], ["MA [21]", "112.723", "#98e060"], ["+3.00σ [21]", "113.704", "#ff9830"],
  ["+2.00σ [21]", "113.377", "#6060ff"], ["+1.00σ [21]", "113.050", "#c040ff"], ["-1.00σ [21]", "112.396", "#c040ff"],
  ["-2.00σ [21]", "112.069", "#6060ff"], ["-3.00σ [21]", "111.742", "#ff9830"],
  ["一目均衡表"], ["転換線 [9]", "112.735", "#98e060"], ["基準線 [26]", "112.716", "#ff0000"],
  ["先行スパン1 [26]", "113.104", "#ffff20"], ["先行スパン2 [52]", "112.577", "#ff8800"], ["遅行スパン [26]", "", "#ffff80"],
  ["ピークボトム [10]"], ["パラボリック [0.020]"], ["下降", "", "#f37a78"], ["上昇", "112.426", "#7ad0f0"],
  ["MACD [12, 26, 9]"], ["MACD", "0.004", "#98e060"], ["Signal", "0.083", "#ff9830"]
];

document.getElementById("legend").innerHTML = legend.map(([name, value, color]) =>
  value === undefined
    ? `<tr><th>${name}<button aria-label="close">×</button></th></tr>`
    : `<tr><td class="swatch" style="background-color: ${color || "transparent"}"></td><td>${name}</td><td class="value">${value}</td></tr>`
).join("");

drawChart();
```
